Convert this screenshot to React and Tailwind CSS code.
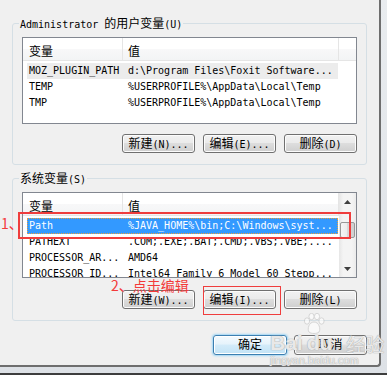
import React from "react";

const CJK = /([\u3000-\u303f\u4e00-\u9fff\uff00-\uffef]+)/;

function T({ s }) {
  return s.split(CJK).map((p, i) =>
    i % 2 === 1 ? (
      <span key={i} className="font-['Noto_Sans_CJK_SC',sans-serif] text-[12px]">
        {p}
      </span>
    ) : (
      <React.Fragment key={i}>{p}</React.Fragment>
    )
  );
}

function Btn({ label, w = "w-[73px]", h = "h-[19px]", def = false }) {
  return (
    <div
      className={`${w} ${h} flex items-center justify-center rounded-[3px] border text-black ${
        def
          ? "border-[#3c7fb1] bg-[linear-gradient(#f4fafe,#e6f3fb_45%,#d3ebf9_50%,#c2e3f6)] shadow-[0_0_2px_1px_#9fd6f5,inset_0_0_0_1px_#ffffff]"
          : "border-[#707070] bg-[linear-gradient(#f2f2f2,#ebebeb_45%,#dddddd_50%,#cfcfcf)] shadow-[inset_0_0_0_1px_#fcfcfc]"
      }`}
    >
      <span className="leading-[14px] whitespace-nowrap">
        <T s={label} />
      </span>
    </div>
  );
}

function Row({ k, v, sel = false, inactive = false }) {
  return (
    <div className="h-[16px] pl-[4px] flex shrink-0">
      <div
        className={`w-[311px] h-[16px] flex items-center leading-[14px] border ${
          sel
            ? "bg-[#3399ff] text-white border-dotted border-[#e8a040]"
            : inactive
            ? "bg-[#ececec] border-transparent"
            : "border-transparent"
        }`}
      >
        <div className="w-[94px] pl-[1px] whitespace-nowrap overflow-hidden">{k}</div>
        <div className="pl-[6px] whitespace-nowrap overflow-hidden">{v}</div>
      </div>
    </div>
  );
}

function Arrow({ up }) {
  return (
    <svg width="7" height="4" viewBox="0 0 7 4">
      {up ? <path d="M0 4 L3.5 0 L7 4 Z" fill="#3f3f3f" /> : <path d="M0 0 L3.5 4 L7 0 Z" fill="#3f3f3f" />}
    </svg>
  );
}

function Scrollbar() {
  return (
    <div className="w-[17px] shrink-0 flex flex-col bg-[linear-gradient(90deg,#e6e6e6,#f4f4f4_25%,#f4f4f4_75%,#ebebeb)]">
      <div className="h-[17px] flex items-center justify-center shrink-0">
        <Arrow up />
      </div>
      <div className="flex-1 flex flex-col">
        <div className="mt-[12px] mx-[1px] h-[16px] rounded-[2px] border border-[#989898] bg-[linear-gradient(90deg,#f5f5f5,#ebebeb_50%,#dadada_50%,#cfcfcf)]" />
      </div>
      <div className="h-[17px] flex items-center justify-center shrink-0">
        <Arrow />
      </div>
    </div>
  );
}

function List({ h, scroll = false, children }) {
  return (
    <div className={`${h} w-[335px] border border-[#828790] bg-white flex overflow-hidden`}>
      <div className="flex-1 min-w-0 flex flex-col overflow-hidden">
        <div className="h-[23px] shrink-0 flex border-b border-[#e5e5e5] bg-[linear-gradient(#ffffff,#ffffff_50%,#f8f8f9_50%,#f3f4f5)]">
          <div className="w-[100px] pl-[6px] pt-[4px] flex items-center border-r border-[#e5e5e5]">
            <T s="变量" />
          </div>
          <div className="w-[216px] pl-[5px] pt-[4px] flex items-center border-r border-[#e5e5e5]">
            <T s="值" />
          </div>
        </div>
        <div className="pt-[2px] flex flex-col">{children}</div>
      </div>
      {scroll && <Scrollbar />}
    </div>
  );
}

function Group({ label, children }) {
  return (
    <fieldset className="w-[355px] border border-[#d5dfe5] rounded-[3px] pl-[9px] pt-[7px] pb-[11px]">
      <legend className="ml-[-3px] px-[1px] h-[14px] leading-[14px] whitespace-nowrap">
        <T s={label} />
      </legend>
      {children}
    </fieldset>
  );
}

export default function App() {
  return (
    <div className="relative w-[387px] h-[375px] overflow-hidden bg-[#3d3d3d] font-['DejaVu_Sans_Mono','Noto_Sans_CJK_SC',monospace] text-[10px] text-black">
      <div className="w-[387px] h-[373px] bg-[linear-gradient(#e9ecef,#dde1e6)]">
        <div className="w-[381px] h-[367px] bg-[#f0f0f0] border-r-2 border-b-2 border-[#6e6e6e] rounded-br-[4px] pt-[16px] pl-[12px] flex flex-col">
          <Group label="Administrator 的用户变量(U)">
            <List h="h-[87px]">
              <Row k="MOZ_PLUGIN_PATH" v={"d:\\Program Files\\Foxit Software..."} inactive />
              <Row k="TEMP" v={"%USERPROFILE%\\AppData\\Local\\Temp"} />
              <Row k="TMP" v={"%USERPROFILE%\\AppData\\Local\\Temp"} />
            </List>
            <div className="w-[335px] mt-[10px] flex justify-end gap-[8px]">
              <Btn label="新建(N)..." />
              <Btn label="编辑(E)..." />
              <Btn label="删除(D)" />
            </div>
          </Group>

          <div className="mt-[6px]">
            <Group label="系统变量(S)">
              <List h="h-[86px]" scroll>
                <Row k="Path" v={"%JAVA_HOME%\\bin;C:\\Windows\\syst..."} sel />
                <Row k="PATHEXT" v=".COM;.EXE;.BAT;.CMD;.VBS;.VBE;...." />
                <Row k="PROCESSOR_AR..." v="AMD64" />
                <Row k="PROCESSOR_ID..." v="Intel64 Family 6 Model 60 Stepp..." />
              </List>
              <div className="w-[335px] mt-[12px] flex justify-end gap-[8px]">
                <Btn label="新建(W)..." />
                <Btn label="编辑(I)..." />
                <Btn label="删除(L)" />
              </div>
            </Group>
          </div>

          <div className="w-[355px] mt-[14px] flex justify-end gap-[7px]">
            <Btn label="确定" w="w-[74px]" h="h-[20px]" def />
            <Btn label="取消" w="w-[73px]" h="h-[20px]" />
          </div>
        </div>
      </div>

      {/* Watermark */}
      <div className="absolute left-[270px] top-[332px] pointer-events-none select-none text-[#fbfbfb]/80 [text-shadow:0_0_1px_#a8a8a8,0_0_1px_#a8a8a8]">
        <div className="flex items-end leading-none">
          <span className="font-['Liberation_Sans',sans-serif] font-bold text-[21px]">Bai</span>
          <span className="ml-[4px] font-['Liberation_Sans',sans-serif] font-bold text-[21px]">du</span>
          <span className="ml-[14px] font-['Noto_Sans_CJK_SC',sans-serif] text-[19px]">经验</span>
        </div>
        <div className="mt-[2px] font-['Liberation_Sans',sans-serif] text-[11px] leading-none">jingyan.baidu.com</div>
      </div>
      <svg className="absolute left-[302px] top-[313px] pointer-events-none opacity-60" width="24" height="22" viewBox="0 0 24 22">
        <g fill="#ffffff" stroke="#b8b8b8" strokeWidth="0.8">
          <ellipse cx="5" cy="8" rx="2.6" ry="3.2" />
          <ellipse cx="9.5" cy="3.5" rx="2.6" ry="3.2" />
          <ellipse cx="15" cy="3.5" rx="2.6" ry="3.2" />
          <ellipse cx="19.5" cy="8" rx="2.6" ry="3.2" />
          <path d="M12 9 C7 9 5 16 7 19 C9 21 15 21 17 19 C19 16 17 9 12 9 Z" />
        </g>
      </svg>

      {/* Red annotations */}
      <div className="absolute left-[18px] top-[212px] w-[333px] h-[27px] border-2 border-[#ef3d3d] pointer-events-none" />
      <div className="absolute left-[203px] top-[286px] w-[78px] h-[29px] border border-[#ef3d3d] pointer-events-none" />
      <div className="absolute left-[1px] top-[216px] font-['Noto_Sans_CJK_SC',sans-serif] text-[14px] leading-none text-[#f33a3a] whitespace-nowrap">
        1、
      </div>
      <div className="absolute left-[111px] top-[278px] font-['Noto_Sans_CJK_SC',sans-serif] text-[14px] leading-none text-[#f33a3a] whitespace-nowrap">
        2、点击编辑
      </div>
    </div>
  );
}
